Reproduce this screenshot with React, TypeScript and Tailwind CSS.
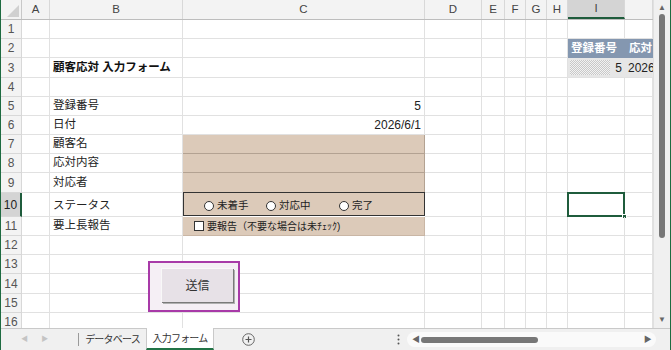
import React from 'react'

const FONT = { fontFamily: '"Liberation Sans", "Noto Sans CJK JP", sans-serif' }

const cols = [
    { key: 'A', w: 'w-[28px]' },
    { key: 'B', w: 'w-[133px]' },
    { key: 'C', w: 'w-[242px]' },
    { key: 'D', w: 'w-[57px]' },
    { key: 'E', w: 'w-[23px]' },
    { key: 'F', w: 'w-[21px]' },
    { key: 'G', w: 'w-[21px]' },
    { key: 'H', w: 'w-[21px]' },
    { key: 'I', w: 'w-[57px]' },
    { key: 'J', w: 'w-[28px]' },
]

const rowHeights = [
    'h-[19px]', 'h-[19px]', 'h-[20px]', 'h-[19px]', 'h-[19px]', 'h-[19px]', 'h-[19px]', 'h-[19px]',
    'h-[20px]', 'h-[24px]', 'h-[19px]', 'h-[19px]', 'h-[19px]', 'h-[20px]', 'h-[19px]', 'h-[19px]',
]

const labels: Record<number, string> = {
    5: '登録番号',
    6: '日付',
    7: '顧客名',
    8: '応対内容',
    9: '対応者',
    10: 'ステータス',
    11: '要上長報告',
}

function Radio({ label, width }: { label: string; width: string }) {
    return (
        <div className={`flex items-center gap-[3px] ${width}`}>
            <span className="w-[10px] h-[10px] rounded-full border border-[#333] bg-white" />
            <span className="text-[10.5px] text-[#222]">{label}</span>
        </div>
    )
}

function Cell({ row, col }: { row: number; col: string }) {
    const box = 'relative h-full shrink-0 flex items-center'
    const base = `${box} border-r border-b border-[#e1e1e1] overflow-hidden`
    const tan = row >= 7 && row <= 11 && col === 'C'

    if (col === 'B') {
        if (row === 3) {
            return <div className={`${base} pl-[3px] text-[11.5px] font-bold text-[#111]`}>顧客応対 入力フォーム</div>
        }
        if (labels[row]) {
            return (
                <div className={`${base} pl-[3px] text-[11.5px] text-[#222] ${row === 10 ? 'items-end pb-[2px]' : ''}`}>
                    {labels[row]}
                </div>
            )
        }
    }

    if (col === 'C') {
        if (row === 5) return <div className={`${base} justify-end pr-[3px] text-[12px] text-[#222]`}>5</div>
        if (row === 6) return <div className={`${base} justify-end pr-[3px] text-[12px] text-[#222]`}>2026/6/1</div>
        if (row === 10) {
            return (
                <div className={`${box} bg-[#dccab9] border border-[#333] -mt-px h-[25px] pl-[20px] pt-[3px]`}>
                    <Radio label="未着手" width="w-[62px]" />
                    <Radio label="対応中" width="w-[73px]" />
                    <Radio label="完了" width="w-[40px]" />
                </div>
            )
        }
        if (row === 11) {
            return (
                <div className={`${box} bg-[#dccab9] border-r border-b border-[#c9b6a5] pl-[11px] gap-[3px]`}>
                    <span className="w-[10px] h-[10px] border border-[#333] bg-white" />
                    <span className="text-[10px] text-[#222]">要報告（不要な場合は未ﾁｪｯｸ)</span>
                </div>
            )
        }
        if (tan) return <div className={`${box} bg-[#dccab9] border-r border-b border-[#b3a292]`} />
    }

    if (col === 'I') {
        if (row === 2) return <div className={`${box} bg-[#8497b0] pl-[3px] text-[11.5px] font-bold text-white`}>登録番号</div>
        if (row === 3) {
            return (
                <div className={`${box} bg-[#e6e6e6] border-b border-[#e1e1e1] justify-end pr-[3px] text-[12px] text-[#222]`}>
                    <div className="absolute left-[2px] top-[2px] bottom-[2px] w-[40px] bg-[repeating-conic-gradient(#c8c8c8_0_25%,#f2f2f2_0_50%)] bg-[length:2px_2px]" />
                    <span className="relative">5</span>
                </div>
            )
        }
        if (row === 10) {
            return (
                <div className={`${box} border-r border-b border-[#e1e1e1] z-10`}>
                    <div className="absolute -left-[1px] -top-[1px] w-[58px] h-[25px] border-2 border-[#1f5c3c]" />
                    <div className="absolute right-[-3px] bottom-[-3px] w-[5px] h-[5px] bg-[#1f5c3c] border border-white" />
                </div>
            )
        }
    }

    if (col === 'J') {
        if (row === 2) return <div className={`${box} bg-[#8497b0] pl-[4px] text-[11.5px] font-bold text-white whitespace-nowrap overflow-hidden`}>応対</div>
        if (row === 3) return <div className={`${box} bg-[#e6e6e6] border-b border-[#e1e1e1] pl-[3px] text-[12px] text-[#222] whitespace-nowrap overflow-hidden`}>2026</div>
    }

    return <div className={base} />
}

export default function App() {
    return (
        <div className="w-[671px] h-[350px] bg-white flex flex-col overflow-hidden border-l border-r border-[#1e6b41]" style={FONT}>
            <div className="flex h-[328px] overflow-hidden">
                {/* sheet grid */}
                <div className="w-[652px] shrink-0 overflow-hidden relative">
                    <div className="flex h-[20px] bg-[#f3f3f3] border-b border-[#bdbdbd] w-[700px]">
                        <div className="w-[21px] h-full shrink-0 border-r border-[#c8c8c8] relative">
                            <div className="absolute right-[2px] bottom-[2px] w-0 h-0 border-l-[12px] border-l-transparent border-b-[12px] border-b-[#d0d0d0]" />
                        </div>
                        {cols.map((c) => (
                            <div
                                key={c.key}
                                className={`${c.w} h-full shrink-0 border-r border-[#d8d8d8] flex items-center justify-center text-[11.5px] text-[#444] ${c.key === 'I' ? 'bg-[#d4d4d4] border-b-2 border-b-[#1f5c3c] text-[#222]' : ''}`}
                            >
                                {c.key === 'J' ? '' : c.key}
                            </div>
                        ))}
                    </div>
                    {rowHeights.map((h, i) => {
                        const row = i + 1
                        return (
                            <div key={row} className={`flex ${h} w-[700px] ${row === 10 ? 'relative z-10' : ''}`}>
                                <div
                                    className={`w-[21px] h-full shrink-0 border-r border-b border-[#d8d8d8] flex items-center justify-center text-[12px] ${row === 10 ? 'bg-[#d4d4d4] border-r-2 border-r-[#1f5c3c] text-[#222]' : 'bg-[#f3f3f3] text-[#555]'}`}
                                >
                                    {row}
                                </div>
                                {cols.map((c) => (
                                    <div key={c.key} className={`${c.w} shrink-0 h-full ${c.key === 'I' ? 'relative z-10' : ''}`}>
                                        <Cell row={row} col={c.key} />
                                    </div>
                                ))}
                            </div>
                        )
                    })}
                    {/* send button shape */}
                    <div className="absolute z-20 left-[147px] top-[261px] w-[92px] h-[51px] border-2 border-[#a83aa8] bg-[#f5eff5]">
                        <div className="absolute left-[11px] top-[5px] w-[72px] h-[34px] bg-[#e7e1e7] border-t border-l border-[#f8f8f8] shadow-[1px_1px_0_#7a7a7a,2px_2px_0_#b0b0b0] flex items-center justify-center text-[12px] text-[#333]">
                            送信
                        </div>
                    </div>
                </div>
                {/* vertical scrollbar */}
                <div className="w-[17px] shrink-0 bg-[#f0f0f0] border-l border-[#e0e0e0] flex flex-col items-center py-[3px]">
                    <span className="text-[8px] leading-[10px] text-[#666]">▲</span>
                    <div className="mt-[1px] w-[6px] h-[224px] rounded-full bg-[#777]" />
                    <div className="flex-1" />
                    <span className="text-[8px] leading-[10px] text-[#666]">▼</span>
                </div>
            </div>
            {/* sheet tabs */}
            <div className="h-[22px] bg-[#f0f0f0] border-t border-[#c9c9c9] flex items-stretch text-[10px] tracking-[-0.8px] text-[#333]">
                <div className="w-[77px] flex items-center gap-[14px] pl-[20px] text-[7px] text-[#c4c4c4]">
                    <span>◀</span>
                    <span>▶</span>
                </div>
                <div className="w-px my-[4px] bg-[#9a9a9a]" />
                <div className="w-[67px] flex items-center justify-center">データベース</div>
                <div className="w-[68px] bg-white border-x border-[#c9c9c9] border-b-2 border-b-[#217346] -mt-px flex items-center justify-center">
                    入力フォーム
                </div>
                <div className="w-[68px] flex items-center justify-center">
                    <svg width="13" height="13" viewBox="0 0 13 13">
                        <circle cx="6.5" cy="6.5" r="5.8" fill="none" stroke="#666" strokeWidth="1" />
                        <path d="M6.5 3.5v6M3.5 6.5h6" stroke="#555" strokeWidth="1.2" />
                    </svg>
                </div>
                <div className="w-[110px]" />
                <div className="w-[12px] flex items-center justify-center">
                    <svg width="3" height="11" viewBox="0 0 3 11">
                        <circle cx="1.5" cy="1.5" r="1" fill="#555" />
                        <circle cx="1.5" cy="5.5" r="1" fill="#555" />
                        <circle cx="1.5" cy="9.5" r="1" fill="#555" />
                    </svg>
                </div>
                <div className="flex-1 flex items-center pl-[3px] pr-[14px]">
                    <div className="flex-1 h-[15px] bg-[#fafafa] rounded-full flex items-center px-[5px] text-[8px] text-[#666]">
                        <span>◀</span>
                        <div className="ml-[2px] w-[117px] h-[6px] rounded-full bg-[#777]" />
                        <div className="flex-1" />
                        <span>▶</span>
                    </div>
                </div>
            </div>
        </div>
    )
}
